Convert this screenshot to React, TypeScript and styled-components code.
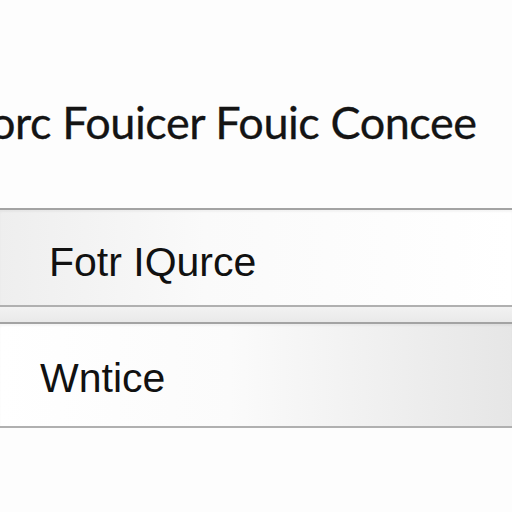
import React from "react";
import styled, { createGlobalStyle } from "styled-components";

const GlobalStyle = createGlobalStyle`
  html, body {
    margin: 0;
    padding: 0;
    background: #fdfdfd;
  }
  body {
    font-family: Lato, "Open Sans", "Liberation Sans", sans-serif;
    color: #141414;
  }
`;

const Page = styled.div`
  width: 512px;
  height: 512px;
  overflow: hidden;
  display: flex;
  flex-direction: column;
  background: #fdfdfd;
`;

const Header = styled.div`
  height: 208px;
  box-sizing: border-box;
  padding-top: 96px;
  overflow: hidden;
`;

const Title = styled.h1`
  margin: 0;
  font-size: 45px;
  font-weight: 400;
  line-height: 52px;
  white-space: nowrap;
  text-indent: -10px;
  letter-spacing: -0.45px;
  -webkit-text-stroke: 0.3px #141414;
`;

const Bar = styled.div<{ $reverse?: boolean; $height: number }>`
  height: ${(p) => p.$height}px;
  box-sizing: border-box;
  border-top: 2px solid #a3a3a3;
  border-bottom: 2px solid #b0b0b0;
  display: flex;
  align-items: center;
  background: ${(p) =>
    p.$reverse
      ? "linear-gradient(90deg, #ffffff 0%, #fbfbfb 45%, #e6e6e6 100%)"
      : "linear-gradient(90deg, #eeeeee 0%, #fafafa 40%, #ffffff 100%)"};
  box-shadow: inset 0 2px 2px rgba(0, 0, 0, 0.04);
`;

const BarLabel = styled.span<{ $indent: number; $drop: number }>`
  padding-left: ${(p) => p.$indent}px;
  padding-top: ${(p) => p.$drop}px;
  font-family: "Liberation Sans", Arial, sans-serif;
  font-size: 41px;
  line-height: 46px;
  white-space: nowrap;
  color: #111;
`;

const Divider = styled.div`
  height: 15px;
  background: linear-gradient(180deg, #f2f2f2, #e9e9e9);
`;

export default function App() {
  return (
    <>
      <GlobalStyle />
      <Page>
        <Header>
          <Title>orc Fouicer Fouic Concee</Title>
        </Header>
        <Bar $height={99}>
          <BarLabel $indent={49} $drop={9}>
            Fotr IQurce
          </BarLabel>
        </Bar>
        <Divider />
        <Bar $height={106} $reverse>
          <BarLabel $indent={40} $drop={5}>
            Wntice
          </BarLabel>
        </Bar>
      </Page>
    </>
  );
}
